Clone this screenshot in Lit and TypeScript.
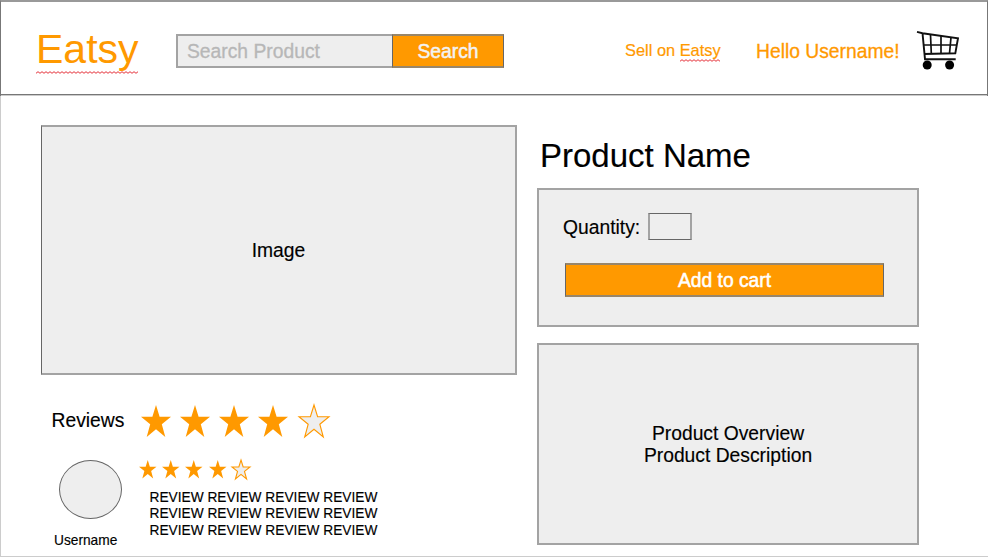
import { LitElement, html, svg, css } from "lit";
import { customElement, property } from "lit/decorators.js";

const STAR = "M16 1 L19.6 12 L31 12 L21.8 19 L25.3 31 L16 23.8 L6.7 31 L10.2 19 L1 12 L12.4 12 Z";

@customElement("star-rating")
class StarRating extends LitElement {
  @property({ type: Number }) value = 4;
  @property({ type: Number }) max = 5;

  static styles = css`
    :host { display: flex; height: var(--star-h); }
    .star { display: block; flex: none; width: var(--star-w); height: var(--star-h); margin-right: var(--star-gap); overflow: visible; }
    .full { fill: #ff9900; }
    .empty {
      width: var(--empty-w); height: var(--empty-h); margin: var(--empty-top) 0 0 var(--empty-left);
      fill: #eeeeee; stroke: #ff9900;
    }
    .empty path { stroke-width: 1.1; vector-effect: non-scaling-stroke; }
  `;

  render() {
    return Array.from({ length: this.max }, (_, i) => html`
      <svg class="star ${i < this.value ? "full" : "empty"}" viewBox="1 1 30 30" preserveAspectRatio="none">
        ${svg`<path d=${STAR}></path>`}
      </svg>`);
  }
}

@customElement("app-root")
class AppRoot extends LitElement {
  static styles = css`
    :host {
      display: block; width: 988px; height: 557px; overflow: hidden;
      font: 19.3px/22px "Liberation Sans", Arial, sans-serif; color: #000; background: #fff;
    }
    * { box-sizing: border-box; }
    .page { height: 557px; border-left: 1px solid #ccc; border-bottom: 1px solid #ccc; }
    .header {
      display: flex; height: 96px; margin-left: -1px;
      border: 1px solid #777; border-top: 2px solid #999; border-bottom: 0;
      box-shadow: inset 0 -1px #ccc, inset 0 -2px #777;
      color: #ff9900; white-space: nowrap;
    }
    .logo { width: 104px; margin: 24px 0 0 35px; font-size: 41px; line-height: 46px; }
    .squiggle { display: block; height: 3px; fill: none; stroke: #e5333c; stroke-width: 1; }
    .logo .squiggle { width: 103px; margin-top: -1px; }
    .search { display: flex; width: 328px; height: 34px; margin: 32px 0 0 36px; }
    .field {
      width: 216px; padding: 4px 0 0 9px; background: #eee; color: #b7b7b7;
      border: 2px solid #a3a3a3; border-right: 0; line-height: 23px; -webkit-text-stroke: .3px #b7b7b7;
    }
    .go {
      width: 112px; background: #ff9900; color: #f3f3f3; text-align: center; line-height: 29px; padding-top: 1px;
      border: 1px solid #666; border-top: 2px solid #98866a; border-bottom: 2px solid #98866a;
      -webkit-text-stroke: .5px #f3f3f3;
    }
    .sell { margin: 39px 0 0 121px; width: 97px; font-size: 16.4px; line-height: 18px; -webkit-text-stroke: .2px #ff9900; }
    .name { display: inline-block; vertical-align: top; }
    .name .squiggle { width: 41px; }
    .hello { margin: 39px 0 0 34px; width: 144px; -webkit-text-stroke: .3px #ff9900; }
    .cart { display: block; flex: none; margin: 28px 0 0 16px; width: 44px; height: 42px; }
    .main { display: flex; }
    .left { width: 476px; margin: 29px 0 0 40px; -webkit-text-stroke: .15px #000; }
    .panel { background: #eee; border: 2px solid #a3a3a3; }
    .image { height: 250px; padding-top: 2px; border-left: 1px solid #666; display: flex; align-items: center; justify-content: center; }
    .summary { display: flex; margin: 30px 0 0 10.5px; height: 34px; }
    .label { width: 89.5px; padding-top: 5px; }
    .big { --star-w: 30px; --star-h: 32px; --star-gap: 9px; --empty-w: 30px; --empty-h: 32px; --empty-left: 1.5px; --empty-top: 0px; }
    .small { --star-w: 17.5px; --star-h: 18.5px; --star-gap: 5.7px; --empty-w: 18px; --empty-h: 19px; --empty-left: .5px; --empty-top: 0px; padding-top: 1px; }
    .review { display: flex; margin-top: 20px; font-size: 13.72px; line-height: 16.5px; }
    .user { width: 98px; padding: 0 0 0 17.5px; }
    .avatar { width: 63px; height: 59px; margin-top: .5px; border: 1px solid #666; border-radius: 50%; background: #eee; }
    .username { margin: 14px 0 0 -4.5px; }
    .text { margin: 12px 0 0 10.5px; white-space: pre; }
    .right { width: 382px; margin: 41px 0 0 20px; -webkit-text-stroke: .15px #000; }
    .title { font-size: 33px; line-height: 38px; margin-left: 3px; height: 51px; }
    .buy { height: 139px; padding: 23px 0 0 24px; }
    .quantity { display: flex; height: 27px; }
    .quantity .caption { width: 85px; padding-top: 4px; }
    .box { width: 44px; height: 27px; border: 1px solid #666; border-left: 2px solid #a3a3a3; border-right: 2px solid #a3a3a3; }
    .add {
      width: 319px; height: 34px; margin: 23px 0 0 2px; background: #ff9900; color: #fff;
      border: 1px solid #666; border-top: 2px solid #98866a; border-bottom: 2px solid #98866a;
      text-align: center; line-height: 31px; -webkit-text-stroke: .5px #fff;
    }
    .overview { height: 202px; margin-top: 16px; padding-top: 2px; display: flex; align-items: center; justify-content: center; text-align: center; }
  `;

  squiggle(width: number) {
    let d = "M0 2.3";
    for (let x = 2, up = true; x <= width; x += 2, up = !up) d += ` L${x} ${up ? 0.7 : 2.3}`;
    return html`<svg class="squiggle" viewBox="0 0 ${width} 3">${svg`<path d=${d}></path>`}</svg>`;
  }

  render() {
    return html`
      <div class="page">
        <header class="header">
          <div class="logo">Eatsy${this.squiggle(103)}</div>
          <div class="search"><div class="field">Search Product</div><div class="go">Search</div></div>
          <div class="sell">Sell on <span class="name">Eatsy${this.squiggle(41)}</span></div>
          <div class="hello">Hello Username!</div>
          <svg class="cart" viewBox="916 30 44 42" fill="none" stroke="#111" stroke-width="1.9">
            <path d="M917 31.8 L922.5 33.2 L958 38.2 L955.3 53.3 L924 54 M922.5 33.2 L925 59.2 H955.7" />
            <path d="M930.5 34.5 L931.3 53.5 M941 36 V53.5 M951 37.3 L949.5 53.5 M923.5 45 H956.7" stroke-width="1.7" />
            <circle cx="927.2" cy="65" r="4.5" fill="#000" stroke="none" />
            <circle cx="949.6" cy="65" r="4.5" fill="#000" stroke="none" />
          </svg>
        </header>
        <main class="main">
          <section class="left">
            <div class="panel image">Image</div>
            <div class="summary"><div class="label">Reviews</div><star-rating class="big"></star-rating></div>
            <div class="review">
              <div class="user"><div class="avatar"></div><div class="username">Username</div></div>
              <div>
                <star-rating class="small"></star-rating>
                <div class="text">${[0, 1, 2].map(() => html`<div>REVIEW REVIEW REVIEW REVIEW</div>`)}</div>
              </div>
            </div>
          </section>
          <section class="right">
            <div class="title">Product Name</div>
            <div class="panel buy">
              <div class="quantity"><div class="caption">Quantity:</div><div class="box"></div></div>
              <div class="add">Add to cart</div>
            </div>
            <div class="panel overview"><div>Product Overview<br />Product Description</div></div>
          </section>
        </main>
      </div>`;
  }
}
